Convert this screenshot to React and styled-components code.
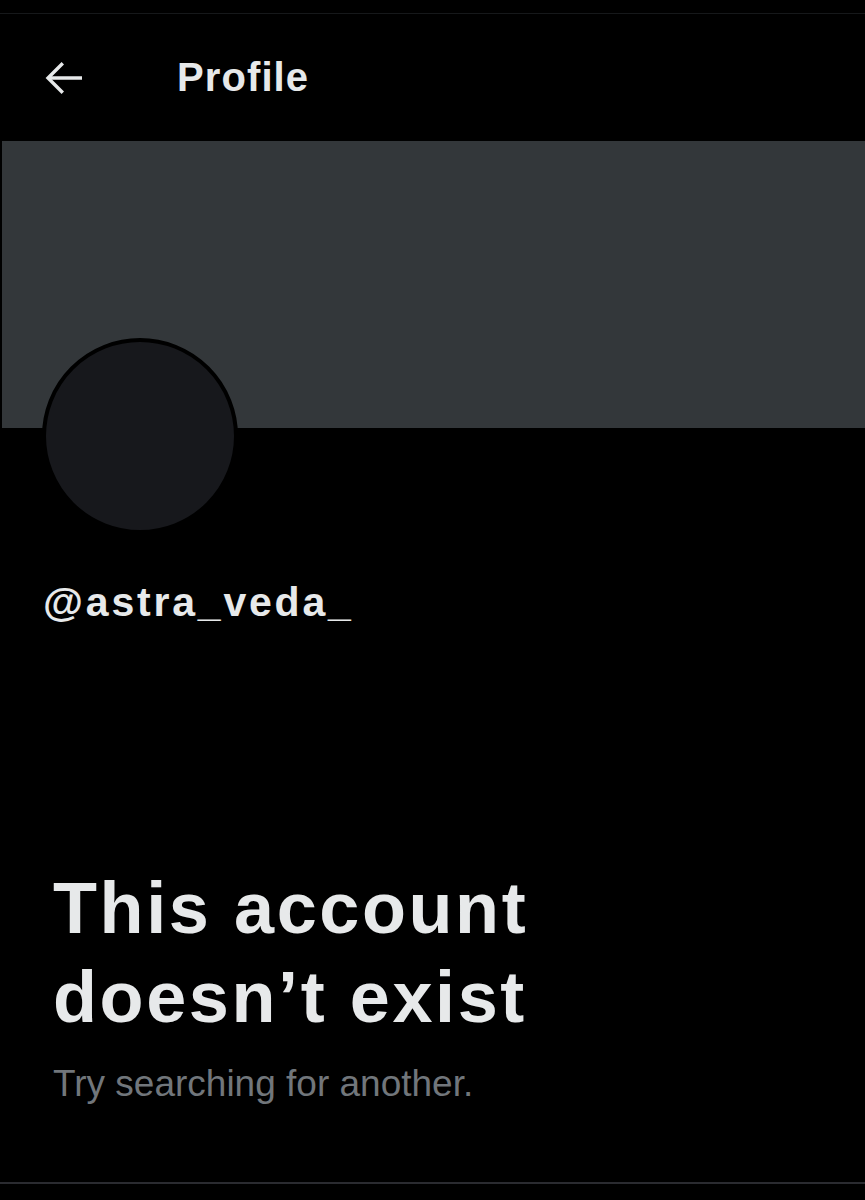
import React from 'react';
import styled, { createGlobalStyle } from 'styled-components';

const GlobalStyle = createGlobalStyle`
  * {
    box-sizing: border-box;
    margin: 0;
    padding: 0;
  }
  body {
    background: #000000;
    color: #e7e9ea;
    font-family: 'Liberation Sans', Arial, sans-serif;
    -webkit-font-smoothing: antialiased;
  }
`;

const Page = styled.div`
  width: 865px;
  min-height: 1200px;
  background: #000000;
  display: flex;
  flex-direction: column;
`;

const StatusStrip = styled.div`
  height: 14px;
  border-bottom: 1px solid #16181a;
`;

const Header = styled.header`
  height: 127px;
  display: flex;
  align-items: center;
  padding-left: 40px;
  gap: 89px;
`;

const BackButton = styled.button`
  width: 48px;
  height: 48px;
  border: none;
  background: transparent;
  color: #e7e9ea;
  display: flex;
  align-items: center;
  justify-content: center;
  cursor: pointer;
`;

const Title = styled.h1`
  font-size: 40px;
  font-weight: 700;
  letter-spacing: 1.1px;
  color: #e7e9ea;
`;

const Banner = styled.div`
  margin-left: 2px;
  height: 287px;
  background: #33373a;
`;

const Avatar = styled.div`
  width: 196px;
  height: 196px;
  margin: -90px 0 0 42px;
  border-radius: 50%;
  border: 4px solid #000000;
  background: #17181c;
  position: relative;
`;

const Handle = styled.div`
  margin: 44px 0 0 43px;
  font-size: 41px;
  line-height: 48px;
  font-weight: 700;
  letter-spacing: 2.8px;
  color: #e7e9ea;
`;

const Empty = styled.section`
  margin: 238px 0 0 53px;
  display: flex;
  flex-direction: column;
`;

const Heading = styled.h2`
  font-size: 72px;
  line-height: 89px;
  font-weight: 700;
  letter-spacing: 2.6px;
  color: #e7e9ea;
`;

const Sub = styled.p`
  margin-top: 20px;
  font-size: 37px;
  line-height: 44px;
  color: #71767b;
`;

const BottomBar = styled.div`
  margin-top: auto;
  height: 18px;
  border-top: 2px solid #2a2b30;
`;

const BackArrow = () => (
  <svg width="48" height="48" viewBox="0 0 24 24" fill="none" stroke="currentColor" strokeWidth="1.7">
    <path d="M4 12H21" />
    <path d="M11.4 4.6L4 12l7.4 7.4" />
  </svg>
);

export default function App() {
  return (
    <>
      <GlobalStyle />
      <Page>
        <StatusStrip />
        <Header>
          <BackButton aria-label="Back">
            <BackArrow />
          </BackButton>
          <Title>Profile</Title>
        </Header>
        <Banner />
        <Avatar />
        <Handle>@astra_veda_</Handle>
        <Empty>
          <Heading>
            This account
            <br />
            doesn’t exist
          </Heading>
          <Sub>Try searching for another.</Sub>
        </Empty>
        <BottomBar />
      </Page>
    </>
  );
}
